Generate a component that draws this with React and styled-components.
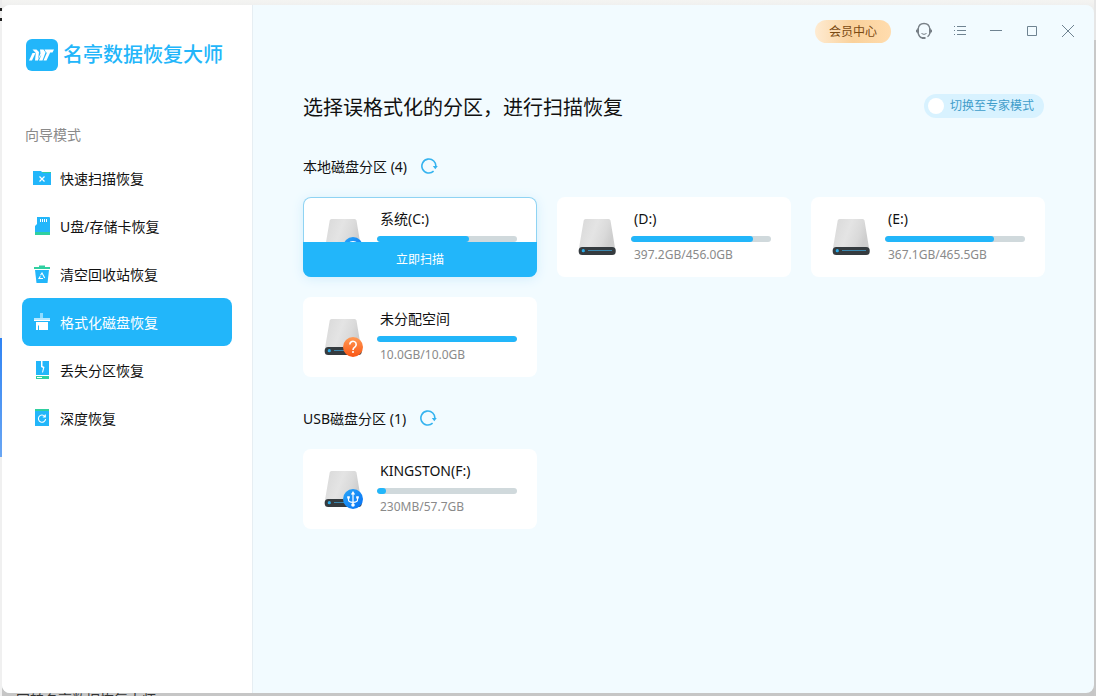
import React, { useState } from 'react';
import styled, { createGlobalStyle } from 'styled-components';

const theme = {
  blue: '#22b6fa',
  green: '#2fcfa0',
  text: '#111111',
  gray: '#8a8a8a',
  stroke: '#6f8391',
};

const GlobalStyle = createGlobalStyle`
  * {
    box-sizing: border-box;
  }
  body {
    margin: 0;
    font-family: 'Noto Sans', 'Noto Sans CJK SC', sans-serif;
    font-size: 14px;
    color: ${theme.text};
  }
  button {
    font-family: inherit;
    border: none;
    padding: 0;
    cursor: pointer;
  }
`;

const Desktop = styled.div`
  display: flex;
  flex-direction: column;
  min-height: 100vh;
  padding: 5px 2px 0;
  background:
    linear-gradient(#ececec 8px, #222 8px, #222 11px, #ececec 11px, #ececec 18px, #222 18px, #222 21px, #f0f0f0 21px, #f0f0f0 338px, #2f83f3 338px, #6aa6f3 457px, #f0f0f0 457px) left top / 2px 100% no-repeat,
    linear-gradient(#e6e6e6 40px, #c8c8c8 40px) right top / 2px 100% no-repeat,
    linear-gradient(#f4f4f2, #e8e8e8) left top / 100% 16px no-repeat,
    #c6c6c6;
`;

const Taskbar = styled.div`
  height: 3px;
  padding-left: 14px;
  overflow: hidden;
  line-height: 14px;
  color: #333;
`;

const Window = styled.div`
  flex: 1;
  display: flex;
  border-radius: 8px;
  overflow: hidden;
  background: #f2fbff;
`;

const Sidebar = styled.aside`
  width: 251px;
  flex-shrink: 0;
  padding: 34px 20px;
  background: #fff;
  border-right: 1px solid #e6eef3;
`;

const Logo = styled.div`
  display: flex;
  align-items: center;
  gap: 5px;
  padding-left: 4px;
  color: ${theme.blue};
  font-size: 20px;
  font-weight: 500;
  line-height: 32px;
  white-space: nowrap;
`;

const NavTitle = styled.h2`
  margin: 54px 0 9px;
  padding-left: 3px;
  font-size: 14px;
  font-weight: 400;
  line-height: 20px;
  color: ${theme.gray};
`;

const NavItem = styled.button`
  display: flex;
  align-items: center;
  gap: 8px;
  width: 100%;
  height: 48px;
  padding: 0 10px;
  border-radius: 8px;
  font-size: 14px;
  text-align: left;
  color: ${props => (props.$active ? '#fff' : theme.text)};
  background: ${props => (props.$active ? theme.blue : 'transparent')};
`;

const Main = styled.main`
  flex: 1;
  min-width: 0;
`;

const TopBar = styled.header`
  display: flex;
  align-items: center;
  justify-content: flex-end;
  height: 52px;
  padding-right: 8px;
`;

const VipButton = styled.button`
  width: 76px;
  height: 23px;
  margin-right: 15px;
  border-radius: 12px;
  font-size: 12px;
  line-height: 23px;
  color: #7a4a12;
  background: linear-gradient(90deg, #feebd2, #fad19b 50%, #ffdcae);
`;

const IconButton = styled.button`
  display: flex;
  align-items: center;
  justify-content: center;
  width: 36px;
  height: 36px;
  background: none;
`;

const Content = styled.div`
  padding: 37px 49px 36px 50px;
`;

const TitleRow = styled.div`
  display: flex;
  align-items: flex-start;
  justify-content: space-between;
  margin-bottom: 33px;
`;

const Title = styled.h1`
  margin: 0;
  font-size: 20px;
  font-weight: 400;
  line-height: 28px;
`;

const ModeSwitch = styled.label`
  display: flex;
  align-items: center;
  gap: 6px;
  height: 24px;
  padding: 0 10px 0 4px;
  margin-right: 1px;
  border-radius: 12px;
  font-size: 12px;
  line-height: 24px;
  color: #3f9dca;
  background: #d8f2ff;
  cursor: pointer;
  input {
    appearance: none;
    width: 16px;
    height: 16px;
    margin: 0;
    border-radius: 50%;
    background: #fff;
  }
`;

const Section = styled.section`
  margin-bottom: 30px;
`;

const SectionHead = styled.div`
  display: flex;
  align-items: center;
  gap: 13px;
  height: 24px;
  margin-bottom: 18px;
  h2 {
    margin: 0;
    font-size: 14px;
    font-weight: 400;
    line-height: 24px;
  }
  button {
    display: flex;
    background: none;
  }
`;

const CardGrid = styled.div`
  display: grid;
  grid-template-columns: repeat(auto-fill, 234px);
  gap: 20px;
`;

const Card = styled.article`
  position: relative;
  display: flex;
  gap: 14px;
  height: 80px;
  padding: 12px 20px;
  border-radius: 8px;
  overflow: hidden;
  background: #fff;
  box-shadow: ${props => (props.$active ? 'inset 0 0 0 1px #8fd3f3, 0 2px 12px #d3eefb' : 'none')};
`;

const DriveSvg = styled.svg`
  flex-shrink: 0;
  margin-top: 10px;
`;

const Info = styled.div`
  width: 140px;
  h3 {
    margin: 0 0 7px;
    padding-left: 3px;
    font-size: 14px;
    font-weight: 400;
    line-height: 20px;
    white-space: nowrap;
  }
  p {
    margin: 5px 0 0;
    padding-left: 3px;
    font-size: 12px;
    line-height: 16px;
    color: ${theme.gray};
  }
`;

const Bar = styled.div`
  height: 6px;
  border-radius: 3px;
  background: #d0d9dc;
  overflow: hidden;
`;

const BarFill = styled.div`
  height: 6px;
  min-width: 9px;
  border-radius: 3px;
  background: ${theme.blue};
`;

const ScanButton = styled.button`
  position: absolute;
  left: 0;
  right: 0;
  bottom: 0;
  height: 35px;
  padding-bottom: 2px;
  font-size: 12px;
  color: #fff;
  background: ${theme.blue};
`;

const navItems = [
  {
    name: '快速扫描恢复',
    icon: (
      <>
        <path d="M9 4h10v4H9z" fill={theme.green} />
        <path d="M1 3h8l2 2h8v12H1z" fill={theme.blue} />
        <path d="M7.5 8.5l5 5M12.5 8.5l-5 5" stroke="#fff" strokeWidth="1.2" />
      </>
    ),
  },
  {
    name: 'U盘/存储卡恢复',
    icon: (
      <>
        <path d="M5 1h12a1 1 0 0 1 1 1v14H3v-6l2-2z" fill={theme.blue} />
        <path d="M3 16h15v3H3z" fill={theme.green} />
        <path d="M8.500 3v3M10.500 3v3M12.500 3v3M14.500 3v3" stroke="#fff" />
      </>
    ),
  },
  {
    name: '清空回收站恢复',
    icon: (
      <>
        <path d="M3 6h14l-1.500 13h-11z" fill={theme.blue} />
        <path d="M2 3h5V1.500h6V3h5v2H2z" fill={theme.green} />
        <path d="M8.500 11.300L10 9l2.700 5M11 14.500H7l1.300-2.200" fill="none" stroke="#fff" strokeWidth="1.100" />
      </>
    ),
  },
  {
    name: '格式化磁盘恢复',
    icon: (
      <>
        <path d="M8 1h3v5H8z" fill="#8edcff" />
        <path d="M2 6h16v3H2z" fill="#b5e8ff" />
        <path d="M2 8h16v1H2z" fill="#fff" />
        <path d="M4 10h12v8H7v-4.500H6V18H4z" fill="#fff" />
      </>
    ),
  },
  {
    name: '丢失分区恢复',
    icon: (
      <>
        <path d="M4 1h13v14H4z" fill={theme.blue} />
        <path d="M4 16h13v3H4z" fill={theme.green} />
        <path d="M5 17.500h5" stroke="#fff" />
        <path d="M9 1h1.500v5l2 1-1.500 5.500h-1l1-4.500-2-1z" fill="#fff" />
      </>
    ),
  },
  {
    name: '深度恢复',
    icon: (
      <>
        <path d="M3 1h14v17H3z" fill={theme.blue} />
        <path d="M3 1h14v2H3z" fill={theme.green} />
        <path d="M12.800 8.300A3.600 3.600 0 1 0 13.600 11M13.300 6.500v2.500h-2.500" fill="none" stroke="#fff" strokeWidth="1.100" />
      </>
    ),
  },
];

const localDisks = [
  { name: '系统(C:)', percent: 66, badge: 'system', active: true },
  { name: '(D:)', size: '397.2GB/456.0GB', percent: 87 },
  { name: '(E:)', size: '367.1GB/465.5GB', percent: 78 },
  { name: '未分配空间', size: '10.0GB/10.0GB', percent: 100, badge: 'unknown' },
];

const usbDisks = [
  { name: 'KINGSTON(F:)', size: '230MB/57.7GB', percent: 1, badge: 'usb' },
];

function LogoIcon() {
  return (
    <svg width="32" height="32" viewBox="0 0 32 32">
      <rect width="32" height="32" rx="6" fill={theme.blue} />
      <path d="M3 21.500l3.500-7.500h3l-3.500 7.500z" fill="#fff" />
      <path d="M6.500 10.500h4l2.500 2.500-1 8.500H9l.8-7.500z" fill="#fff" />
      <path d="M11.500 21.500l3-7-.5-4h3.500l2 3-3 8h-3.500l2.500-6z" fill="#fff" />
      <path d="M18.500 10.500h9.500L26.500 13.500h-2.300L20.500 21.500h-3l3.500-8h-1z" fill="#fff" />
    </svg>
  );
}

function DriveIcon({ badge }) {
  return (
    <DriveSvg width="40" height="38" viewBox="0 0 40 38" aria-hidden="true">
      <defs>
        <linearGradient id="driveBody" x1="0" y1="0" x2="1" y2="0.3">
          <stop offset="0" stopColor="#d8d8d8" />
          <stop offset="0.5" stopColor="#e4e4e4" />
          <stop offset="0.8" stopColor="#dadada" />
          <stop offset="1" stopColor="#cecece" />
        </linearGradient>
        <linearGradient id="orangeBadge" x1="0" y1="0" x2="0" y2="1">
          <stop offset="0" stopColor="#ff9a55" />
          <stop offset="1" stopColor="#fa5614" />
        </linearGradient>
        <linearGradient id="blueBadge" x1="0" y1="0" x2="1" y2="1">
          <stop offset="0" stopColor="#2aa7f8" />
          <stop offset="1" stopColor="#0670f5" />
        </linearGradient>
      </defs>
      <path d="M8.500 0h23a2 2 0 0 1 2 1.500L38 29H2L6.700 1.500A2 2 0 0 1 8.500 0z" fill="url(#driveBody)" />
      <rect x="1.700" y="28" width="37" height="8" rx="3.500" fill="#353b3f" />
      <circle cx="6.300" cy="31.700" r="1.600" fill="#2cabe8" />
      <path d="M11 31.500h24" stroke="#3b87ad" strokeWidth="1.200" />
      {badge && (
        <circle cx="30" cy="28" r="10" fill={badge === 'unknown' ? 'url(#orangeBadge)' : 'url(#blueBadge)'} />
      )}
      {badge === 'unknown' && (
        <>
          <path d="M26.800 25.500a3.200 3.200 0 1 1 5 2.600c-1.200.8-1.800 1.400-1.800 2.900" fill="none" stroke="#fff" strokeWidth="1.600" />
          <circle cx="30" cy="33" r="1" fill="#fff" />
        </>
      )}
      {badge === 'usb' && (
        <>
          <path d="M30 22.500v11M25.500 26.500v2.500q0 2 4.500 2.500 4.500-.5 4.500-2.500v-2.500" fill="none" stroke="#fff" strokeWidth="1.200" />
          <path d="M30 20l2.200 3.500h-4.400z" fill="#fff" />
          <path d="M24.200 25.200h2.600v2.400h-2.600zM33.200 25.200h2.600v2.400h-2.600z" fill="#fff" />
          <circle cx="30" cy="34" r="1.800" fill="#fff" />
        </>
      )}
      {badge === 'system' && (
        <path d="M25 23.800q5-3.500 10 0v8q-5-3-10 0z" fill="#fff" />
      )}
    </DriveSvg>
  );
}

function RefreshIcon() {
  return (
    <svg width="18" height="18" viewBox="0 0 18 18" fill="none">
      <path d="M15.800 9A7 7 0 1 0 13.600 13.200" stroke="#35b3ef" strokeWidth="1.600" />
      <path d="M12.800 8h5l-2.500 3.200z" fill="#35b3ef" />
    </svg>
  );
}

function DiskCard({ disk }) {
  return (
    <Card $active={disk.active}>
      <DriveIcon badge={disk.badge} />
      <Info>
        <h3>{disk.name}</h3>
        <Bar>
          <BarFill style={{ width: `${disk.percent}%` }} />
        </Bar>
        {disk.size && <p>{disk.size}</p>}
      </Info>
      {disk.active && <ScanButton>立即扫描</ScanButton>}
    </Card>
  );
}

function DiskSection({ title, disks }) {
  return (
    <Section>
      <SectionHead>
        <h2>{title} ({disks.length})</h2>
        <button type="button" aria-label="刷新">
          <RefreshIcon />
        </button>
      </SectionHead>
      <CardGrid>
        {disks.map(disk => <DiskCard key={disk.name} disk={disk} />)}
      </CardGrid>
    </Section>
  );
}

function WindowControls() {
  return (
    <>
      <IconButton aria-label="客服">
        <svg width="18" height="18" viewBox="0 0 18 18" fill="none">
          <path d="M3.200 7C3.500 3.500 5.800 1.500 9 1.500s5.500 2 5.800 5.500M3.200 11.500c.5 2.200 2 4 4.300 4.700M14.800 11.500c-.5 1.500-1.300 2.500-2.300 3.200" stroke="#788087" strokeWidth="1.300" />
          <path d="M4 6H2.500v1L1 8v2l1.500 1v1H4zM14 6h1.500v1L17 8v2l-1.500 1v1H14zM7 15h3.500v2H7z" fill="#788087" />
          <path d="M6.500 11.500q2.500 1.800 5 0" stroke="#788087" />
        </svg>
      </IconButton>
      <IconButton aria-label="菜单">
        <svg width="12" height="10" viewBox="0 0 12 10" stroke={theme.stroke}>
          <path d="M3 .5h9M3 4.500h9M3 8.500h9M0 .5h1M0 4.500h1M0 8.500h1" />
        </svg>
      </IconButton>
      <IconButton aria-label="最小化">
        <svg width="12" height="12" viewBox="0 0 12 12" stroke={theme.stroke}>
          <path d="M0 5.500h12" />
        </svg>
      </IconButton>
      <IconButton aria-label="最大化">
        <svg width="10" height="10" viewBox="0 0 10 10" fill="none" stroke={theme.stroke}>
          <path d="M.5.5h9v9h-9z" />
        </svg>
      </IconButton>
      <IconButton aria-label="关闭">
        <svg width="12" height="12" viewBox="0 0 12 12" stroke={theme.stroke}>
          <path d="M0 0l12 12M12 0L0 12" />
        </svg>
      </IconButton>
    </>
  );
}

function App() {
  const [current, setCurrent] = useState('格式化磁盘恢复');

  return (
    <>
      <GlobalStyle />
      <Desktop>
        <Window>
          <Sidebar>
            <Logo>
              <LogoIcon />
              <span>名亭数据恢复大师</span>
            </Logo>
            <NavTitle>向导模式</NavTitle>
            <nav>
              {navItems.map(item => (
                <NavItem
                  key={item.name}
                  $active={item.name === current}
                  onClick={() => setCurrent(item.name)}
                >
                  <svg width="20" height="20" viewBox="0 0 20 20">{item.icon}</svg>
                  {item.name}
                </NavItem>
              ))}
            </nav>
          </Sidebar>
          <Main>
            <TopBar>
              <VipButton>会员中心</VipButton>
              <WindowControls />
            </TopBar>
            <Content>
              <TitleRow>
                <Title>选择误格式化的分区，进行扫描恢复</Title>
                <ModeSwitch>
                  <input type="checkbox" />
                  切换至专家模式
                </ModeSwitch>
              </TitleRow>
              <DiskSection title="本地磁盘分区" disks={localDisks} />
              <DiskSection title="USB磁盘分区" disks={usbDisks} />
            </Content>
          </Main>
        </Window>
        <Taskbar>网转名亭数据恢复大师</Taskbar>
      </Desktop>
    </>
  );
}

export default App;
